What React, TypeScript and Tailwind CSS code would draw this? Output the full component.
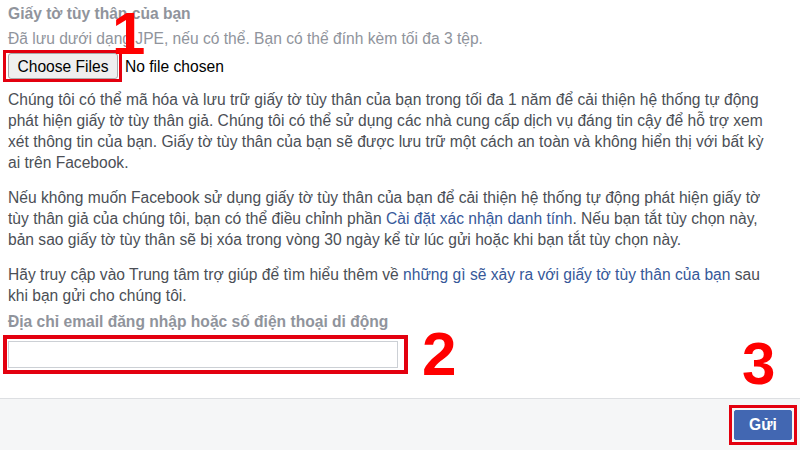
import React from "react";

const linkCls = "text-[#365899]";

function Marker({ n, className }: { n: string; className: string }) {
  return (
    <span
      className={`pointer-events-none absolute font-bold leading-none text-[#f00] ${className}`}
      style={{ fontFamily: '"Liberation Sans", Arial, sans-serif' }}
    >
      {n}
    </span>
  );
}

export default function App() {
  return (
    <div
      className="relative h-[450px] w-[800px] overflow-hidden bg-white text-[15.6px] leading-[21px] text-[#4b4f56]"
      style={{ fontFamily: '"Liberation Sans", Arial, Helvetica, sans-serif' }}
    >
      <div className="flex flex-col px-2 pt-[3px]">
        <div className="font-bold text-[#90949c]">Giấy tờ tùy thân của bạn</div>
        <div className="mt-[4px] text-[#90949c]">
          Đã lưu dưới dạng JPE, nếu có thể. Bạn có thể đính kèm tối đa 3 tệp.
        </div>

        <div className="mt-[1px] flex items-center">
          <div className="-ml-[5px] border-[3px] border-[#e3000f] py-0 pl-[2px] pr-[1px]">
            <button className="block h-[26px] w-[110px] rounded-[3px] border border-[#a9a9a9] bg-[#efefef] text-[15.6px] text-black">
              Choose Files
            </button>
          </div>
          <span className="ml-[3px] text-black">No file chosen</span>
        </div>

        <div className="mt-[7px] whitespace-nowrap">
          <div>Chúng tôi có thể mã hóa và lưu trữ giấy tờ tùy thân của bạn trong tối đa 1 năm để cải thiện hệ thống tự động</div>
          <div>phát hiện giấy tờ tùy thân giả. Chúng tôi có thể sử dụng các nhà cung cấp dịch vụ đáng tin cậy để hỗ trợ xem</div>
          <div>xét thông tin của bạn. Giấy tờ tùy thân của bạn sẽ được lưu trữ một cách an toàn và không hiển thị với bất kỳ</div>
          <div>ai trên Facebook.</div>
        </div>

        <div className="mt-[14px] whitespace-nowrap">
          <div>Nếu không muốn Facebook sử dụng giấy tờ tùy thân của bạn để cải thiện hệ thống tự động phát hiện giấy tờ</div>
          <div>
            tùy thân giả của chúng tôi, bạn có thể điều chỉnh phần{" "}
            <a className={linkCls}>Cài đặt xác nhận danh tính</a>. Nếu bạn tắt tùy chọn này,
          </div>
          <div>bản sao giấy tờ tùy thân sẽ bị xóa trong vòng 30 ngày kể từ lúc gửi hoặc khi bạn tắt tùy chọn này.</div>
        </div>

        <div className="mt-[14px] whitespace-nowrap">
          <div>
            Hãy truy cập vào Trung tâm trợ giúp để tìm hiểu thêm về{" "}
            <a className={linkCls}>những gì sẽ xảy ra với giấy tờ tùy thân của bạn</a> sau
          </div>
          <div>khi bạn gửi cho chúng tôi.</div>
        </div>

        <div className="mt-[5px] font-bold text-[#90949c]">
          Địa chỉ email đăng nhập hoặc số điện thoại di động
        </div>

        <div className="-ml-[5px] mt-[3px] w-[405px] border-[4px] border-[#e3000f] py-[2px] pl-[1px] pr-[6px]">
          <input className="block h-[27px] w-full border border-[#ccd0d5] bg-white outline-none" />
        </div>
      </div>

      <div className="absolute inset-x-0 bottom-0 flex h-[52px] items-center justify-end border-t border-[#dddfe2] bg-[#f5f6f7] pr-[3px]">
        <div className="border-[3px] border-[#e3000f] p-[2px]">
          <button className="block h-[30px] w-[58px] rounded-[2px] border border-[#4267b2] bg-[#4267b2] text-[15.6px] font-bold text-white">
            Gửi
          </button>
        </div>
      </div>

      <Marker n="1" className="left-[112px] top-[4px] text-[60px]" />
      <Marker n="2" className="left-[422px] top-[323px] text-[62px]" />
      <Marker n="3" className="left-[742px] top-[334px] text-[60px]" />
    </div>
  );
}
